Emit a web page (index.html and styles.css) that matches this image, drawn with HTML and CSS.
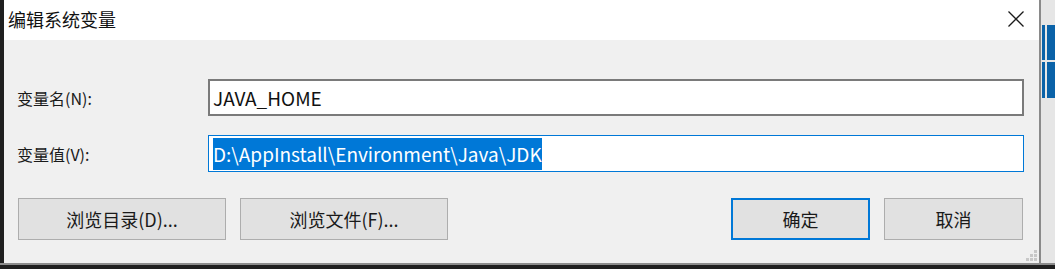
FILE: index.html
```html
<!DOCTYPE html>
<html lang="zh-CN">
<head>
<meta charset="utf-8">
<title>编辑系统变量</title>
<link rel="stylesheet" href="styles.css">
</head>
<body>
<div class="screen">
  <div class="left-strip"></div>
  <div class="dialog">
    <div class="titlebar">
      <span class="title">编辑系统变量</span>
      <svg class="close" width="18" height="18" viewBox="0 0 18 18"><path d="M1.5 1.5 L16.5 16.5 M16.5 1.5 L1.5 16.5" stroke="#1a1a1a" stroke-width="1.3" fill="none"/></svg>
    </div>
    <div class="body">
      <div class="row row-name">
        <span class="label">变量名(N):</span>
        <div class="input">JAVA_HOME</div>
      </div>
      <div class="row row-value">
        <span class="label">变量值(V):</span>
        <div class="input focused"><span class="sel">D:\AppInstall\Environment\Java\JDK</span></div>
      </div>
      <div class="buttons">
        <div class="btn wide">浏览目录(D)...</div>
        <div class="btn wide">浏览文件(F)...</div>
        <div class="spacer"></div>
        <div class="btn small primary">确定</div>
        <div class="btn small">取消</div>
      </div>
      <svg class="grip" width="12" height="12" viewBox="0 0 12 12">
        <rect x="8" y="0" width="3" height="3" fill="#c8c8c8"/>
        <rect x="4" y="4" width="3" height="3" fill="#c8c8c8"/>
        <rect x="8" y="4" width="3" height="3" fill="#c8c8c8"/>
        <rect x="0" y="8" width="3" height="3" fill="#c8c8c8"/>
        <rect x="4" y="8" width="3" height="3" fill="#c8c8c8"/>
        <rect x="8" y="8" width="3" height="3" fill="#c8c8c8"/>
      </svg>
    </div>
  </div>
  <div class="desk">
    <div class="tiles">
      <div class="tile t1"></div><div class="tile t2"></div>
      <div class="tile t3"></div><div class="tile t4"></div>
    </div>
  </div>
</div>
<div class="bottom-strip"></div>
</body>
</html>
```
FILE: styles.css
```css
html, body {
  margin: 0;
  padding: 0;
}
body {
  width: 1055px;
  height: 269px;
  overflow: hidden;
  background: #1f1f1f;
  font-family: "Noto Sans CJK SC", "Noto Sans", sans-serif;
  color: #1a1a1a;
}
.screen {
  display: flex;
  height: 263px;
}
.left-strip {
  width: 4px;
  background: #1f1f1f;
}
.dialog {
  width: 1038px;
  display: flex;
  flex-direction: column;
  background: #f0f0f0;
  border-right: 2px solid #8a8a8a;
  box-sizing: border-box;
}
.titlebar {
  height: 40px;
  background: #ffffff;
  display: flex;
  align-items: center;
  justify-content: space-between;
  padding: 0 14px 2px 4px;
  box-sizing: border-box;
}
.title {
  font-size: 18px;
  line-height: 22px;
  color: #111;
}
.close {
  display: block;
  margin-top: -1px;
}
.body {
  flex: 1;
  position: relative;
  padding: 39px 14px 0 13px;
}
.row {
  display: flex;
  align-items: center;
  height: 37px;
}
.row-value {
  margin-top: 19px;
}
.label {
  width: 191px;
  font-size: 16px;
  color: #1a1a1a;
}
.input {
  width: 816px;
  height: 37px;
  box-sizing: border-box;
  background: #fff;
  border: 2px solid #7a7a7a;
  font-size: 19px;
  line-height: 33px;
  padding-left: 3px;
  color: #111;
  white-space: nowrap;
}
.input.focused {
  border: 1px solid #0078d7;
  padding-left: 4px;
  line-height: 35px;
}
.sel {
  background: #0078d7;
  color: #fff;
  padding: 2px 0 3px 0;
}
.buttons {
  display: flex;
  margin-top: 26px;
  padding-left: 1px;
  padding-right: 2px;
  gap: 14px;
}
.btn {
  height: 42px;
  box-sizing: border-box;
  background: #e1e1e1;
  border: 1px solid #adadad;
  display: flex;
  align-items: center;
  justify-content: center;
  font-size: 18px;
  color: #1a1a1a;
}
.btn.wide { width: 208px; }
.btn.small { width: 139px; }
.btn.primary {
  border: 2px solid #0078d7;
}
.spacer { flex: 1; }
.grip {
  position: absolute;
  right: 1px;
  bottom: 1px;
}
.desk {
  flex: 1;
  background: #e6e6e6;
  padding-top: 25px;
}
.tiles {
  display: grid;
  grid-template-columns: 3px 8px;
  grid-template-rows: 35px 36px;
  gap: 2px;
  padding-left: 1px;
}
.tile { background: #0a62a8; }
.bottom-strip {
  height: 6px;
  background: linear-gradient(#8c8c8c 0, #8c8c8c 2px, #1f1f1f 2px);
}
```
